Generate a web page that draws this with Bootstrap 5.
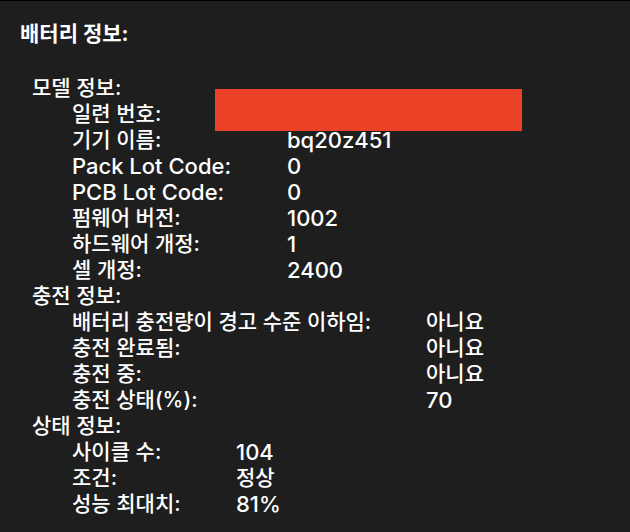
<!DOCTYPE html>
<html lang="ko">
<head>
<meta charset="utf-8">
<meta name="viewport" content="width=device-width, initial-scale=1">
<title>배터리 정보</title>
<link href="https://cdn.jsdelivr.net/npm/bootstrap@5.3.0/dist/css/bootstrap.min.css" rel="stylesheet">
<style>
body { background: #1e1e1e; color: #fff; font-family: Inter, "Noto Sans CJK KR", sans-serif; font-size: 21px; line-height: 26px; font-weight: 500; }
.report { border-top: 1px solid #000; padding: 20px; }
.report h1 { font-size: 21px; line-height: 26px; margin-bottom: 28px; }
.report h2 { font-size: 21px; line-height: 26px; font-weight: 500; }
.report section { padding-left: 12px; }
.entries { padding-left: 40px; }
.entries dt, .entries dd { font-weight: 500; margin: 0; }
.entries .latin { font-size: 22px; }
.model { grid-template-columns: 215px 1fr; }
.charge { grid-template-columns: 354px 1fr; }
.health { grid-template-columns: 164px 1fr; }
.redacted { background: #ea4127; width: 307px; height: 42px; margin: -12px 0 -4px -72px; }
</style>
</head>
<body>
<main class="report">
<h1 class="fw-bold">배터리 정보:</h1>
<section>
<h2 class="m-0">모델 정보:</h2>
<dl class="entries model d-grid m-0 text-nowrap">
<dt>일련 번호:</dt><dd><div class="redacted"></div></dd>
<dt>기기 이름:</dt><dd class="latin">bq20z451</dd>
<dt class="latin">Pack Lot Code:</dt><dd class="latin">0</dd>
<dt class="latin">PCB Lot Code:</dt><dd class="latin">0</dd>
<dt>펌웨어 버전:</dt><dd class="latin">1002</dd>
<dt>하드웨어 개정:</dt><dd class="latin">1</dd>
<dt>셀 개정:</dt><dd class="latin">2400</dd>
</dl>
</section>
<section>
<h2 class="m-0">충전 정보:</h2>
<dl class="entries charge d-grid m-0 text-nowrap">
<dt>배터리 충전량이 경고 수준 이하임:</dt><dd>아니요</dd>
<dt>충전 완료됨:</dt><dd>아니요</dd>
<dt>충전 중:</dt><dd>아니요</dd>
<dt>충전 상태(%):</dt><dd class="latin">70</dd>
</dl>
</section>
<section>
<h2 class="m-0">상태 정보:</h2>
<dl class="entries health d-grid m-0 text-nowrap">
<dt>사이클 수:</dt><dd class="latin">104</dd>
<dt>조건:</dt><dd>정상</dd>
<dt>성능 최대치:</dt><dd class="latin">81%</dd>
</dl>
</section>
</main>
<script src="https://cdn.jsdelivr.net/npm/bootstrap@5.3.0/dist/js/bootstrap.bundle.min.js"></script>
</body>
</html>
